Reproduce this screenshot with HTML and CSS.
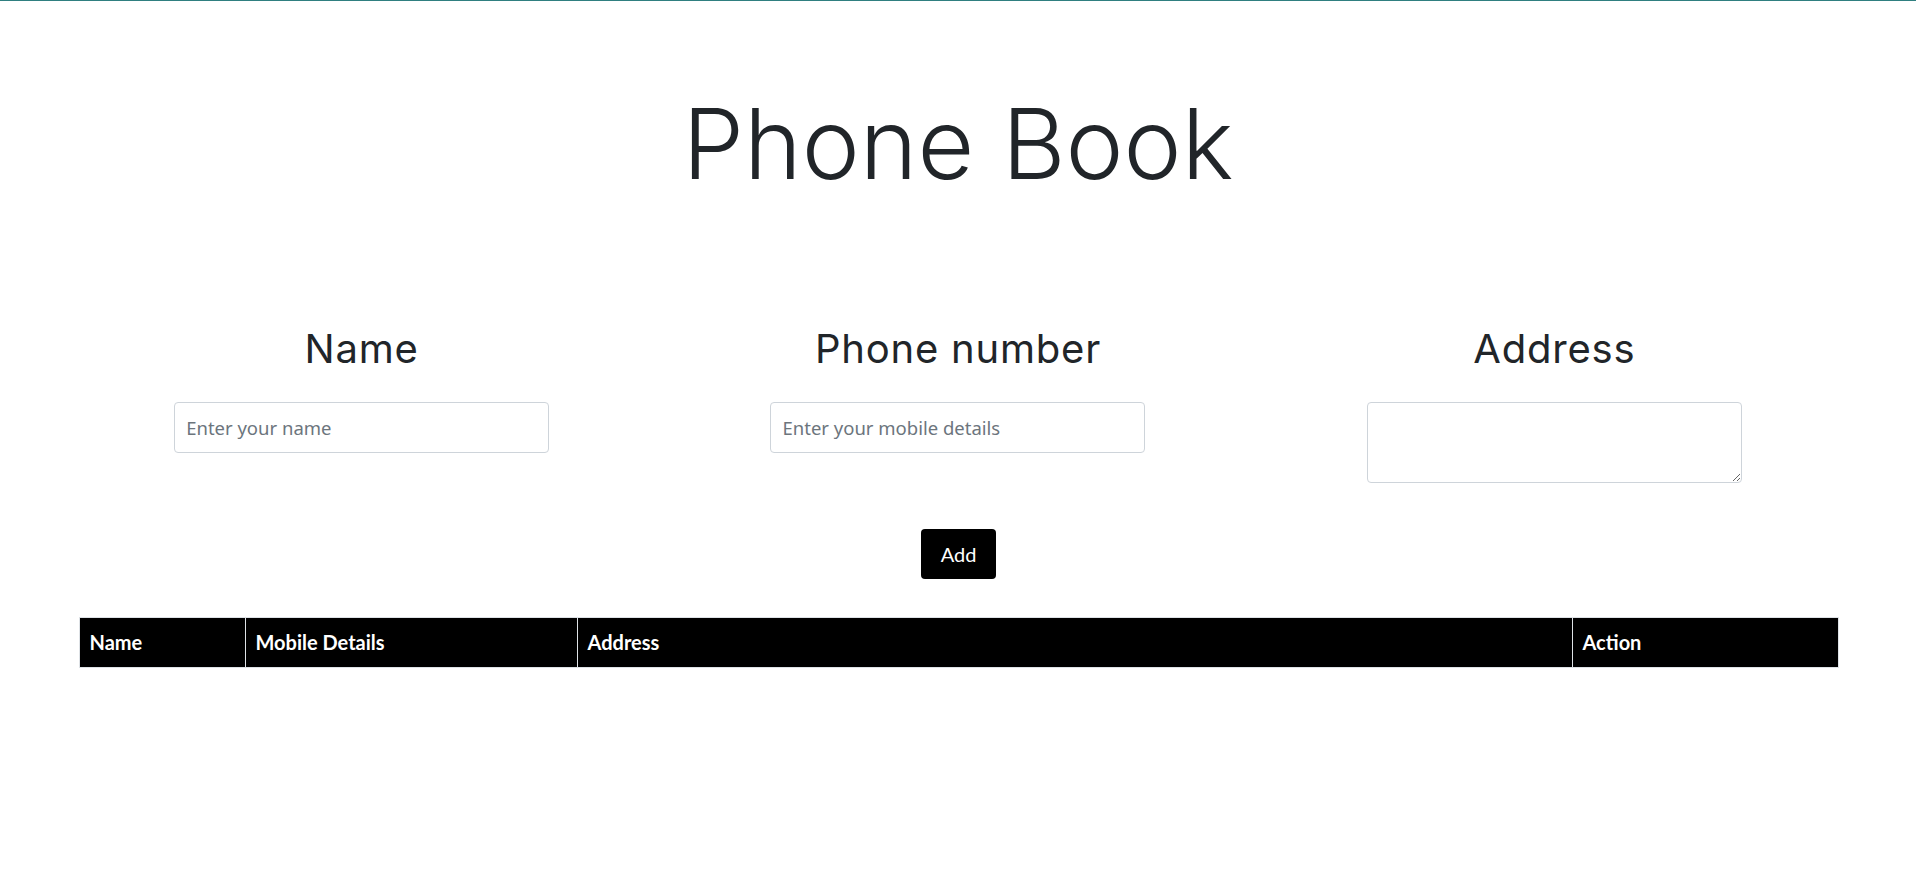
FILE: index.html
```html
<!DOCTYPE html>
<html lang="en">
<head>
<meta charset="utf-8">
<title>Phone Book</title>
<link rel="stylesheet" href="styles.css">
</head>
<body>
<div class="page">
  <h1 class="title">Phone Book</h1>
  <div class="container">
    <div class="fields">
      <div class="field">
        <h2 class="label">Name</h2>
        <input class="control" type="text" placeholder="Enter your name">
      </div>
      <div class="field">
        <h2 class="label">Phone number</h2>
        <input class="control" type="text" placeholder="Enter your mobile details">
      </div>
      <div class="field">
        <h2 class="label">Address</h2>
        <textarea class="control area" rows="2"></textarea>
      </div>
    </div>
    <div class="actions">
      <button class="btn" type="button">Add</button>
    </div>
    <table class="book">
      <colgroup>
        <col class="c-name">
        <col class="c-mobile">
        <col class="c-address">
        <col class="c-action">
      </colgroup>
      <thead>
        <tr>
          <th>Name</th>
          <th>Mobile Details</th>
          <th>Address</th>
          <th>Action</th>
        </tr>
      </thead>
      <tbody></tbody>
    </table>
  </div>
</div>
</body>
</html>
```
FILE: styles.css
```css
html, body {
  margin: 0;
  padding: 0;
  background: #ffffff;
}

body {
  border-top: 1px solid #2f7f80;
  color: #212529;
  font-family: "Lato", "Liberation Sans", sans-serif;
}

.page {
  display: flex;
  flex-direction: column;
}

.title {
  margin: 85px 0 0;
  text-align: center;
  font-family: "Inter", sans-serif;
  font-weight: 320;
  font-size: 98px;
  line-height: 116px;
  color: #212529;
}

.container {
  width: 1759px;
  margin: 0 auto;
}

.fields {
  display: grid;
  grid-template-columns: repeat(3, 1fr);
  margin: 124px -15px 0;
}

.field {
  display: flex;
  flex-direction: column;
  align-items: center;
  padding: 0 15px;
}

.label {
  margin: 0 0 30px;
  font-family: "Inter", sans-serif;
  font-weight: 400;
  font-size: 40px;
  line-height: 46px;
  letter-spacing: 0.8px;
  color: #212529;
}

.control {
  box-sizing: border-box;
  width: 375px;
  height: 51px;
  padding: 0 11px;
  border: 1px solid #ced4da;
  border-radius: 4px;
  font-family: "Noto Sans", sans-serif;
  font-size: 18.5px;
  color: #495057;
  background: #fff;
  outline: none;
}

.control::placeholder {
  color: #6c757d;
}

.area {
  height: 81px;
  padding: 9px 11px;
  resize: vertical;
}

.actions {
  display: flex;
  justify-content: center;
  margin-top: 46px;
}

.btn {
  box-sizing: border-box;
  width: 75px;
  height: 50px;
  margin-left: 1px;
  border: 0;
  border-radius: 4px;
  background: #000;
  color: #fff;
  font-family: "Lato", sans-serif;
  font-size: 20px;
  padding: 0;
}

.book {
  width: 100%;
  margin-top: 38px;
  border-collapse: collapse;
  table-layout: fixed;
}

.c-name { width: 166px; }
.c-mobile { width: 332px; }
.c-address { width: 995px; }
.c-action { width: 266px; }

.book th {
  background: #000;
  color: #fff;
  border: 1px solid #dee2e6;
  padding: 12px 10px;
  text-align: left;
  font-family: "Lato", sans-serif;
  font-weight: 700;
  font-size: 20px;
  line-height: 25px;
}
```
